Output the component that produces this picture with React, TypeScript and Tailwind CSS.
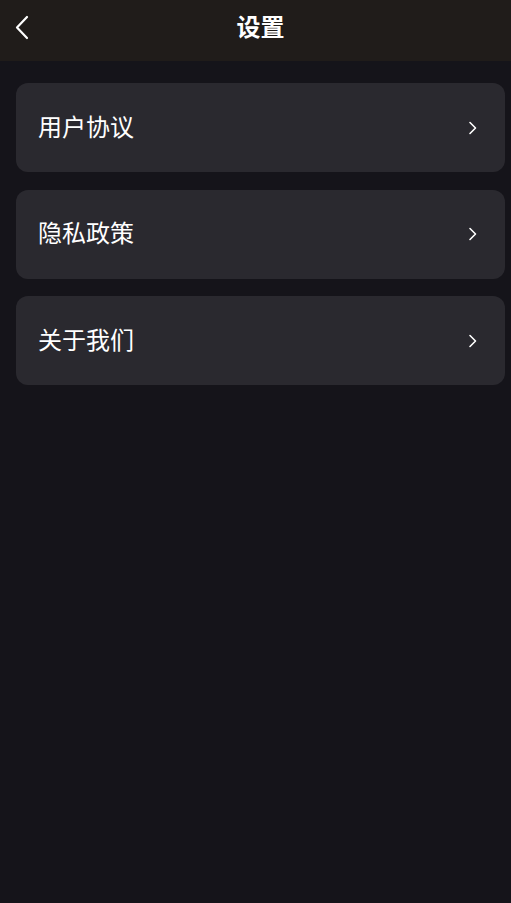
import React from "react";

const items = ["用户协议", "隐私政策", "关于我们"];

function Chevron() {
  return (
    <svg width="10" height="14" viewBox="0 0 10 14" fill="none">
      <path d="M2 1.5 L7.5 7 L2 12.5" stroke="#ffffff" strokeWidth="1.6" strokeLinecap="round" strokeLinejoin="round" />
    </svg>
  );
}

export default function App() {
  return (
    <div className="w-[511px] h-[903px] overflow-hidden bg-[#15141a]" style={{ fontFamily: '"Noto Sans CJK SC", "Noto Sans", sans-serif' }}>
      <div className="w-[521px]">
        <div className="relative h-[61px] bg-[#201c1a] flex items-start justify-center pt-[14px]">
          <div className="absolute left-[14px] top-[15px]">
            <svg width="16" height="25" viewBox="0 0 16 25" fill="none">
              <path d="M13 2 L3 12.5 L13 23" stroke="#ffffff" strokeWidth="2.2" strokeLinecap="round" strokeLinejoin="round" />
            </svg>
          </div>
          <span className="text-white text-[24px] font-bold leading-none">设置</span>
        </div>
        <div className="flex flex-col gap-[17.5px] pt-[22px] px-[16px]">
          {items.map((t) => (
            <div key={t} className="h-[89px] rounded-[12px] bg-[#2a292f] flex items-center justify-between pl-[22px] pr-[27px]">
              <span className="text-white text-[24px] leading-none mb-[4px]">{t}</span>
              <Chevron />
            </div>
          ))}
        </div>
      </div>
    </div>
  );
}
